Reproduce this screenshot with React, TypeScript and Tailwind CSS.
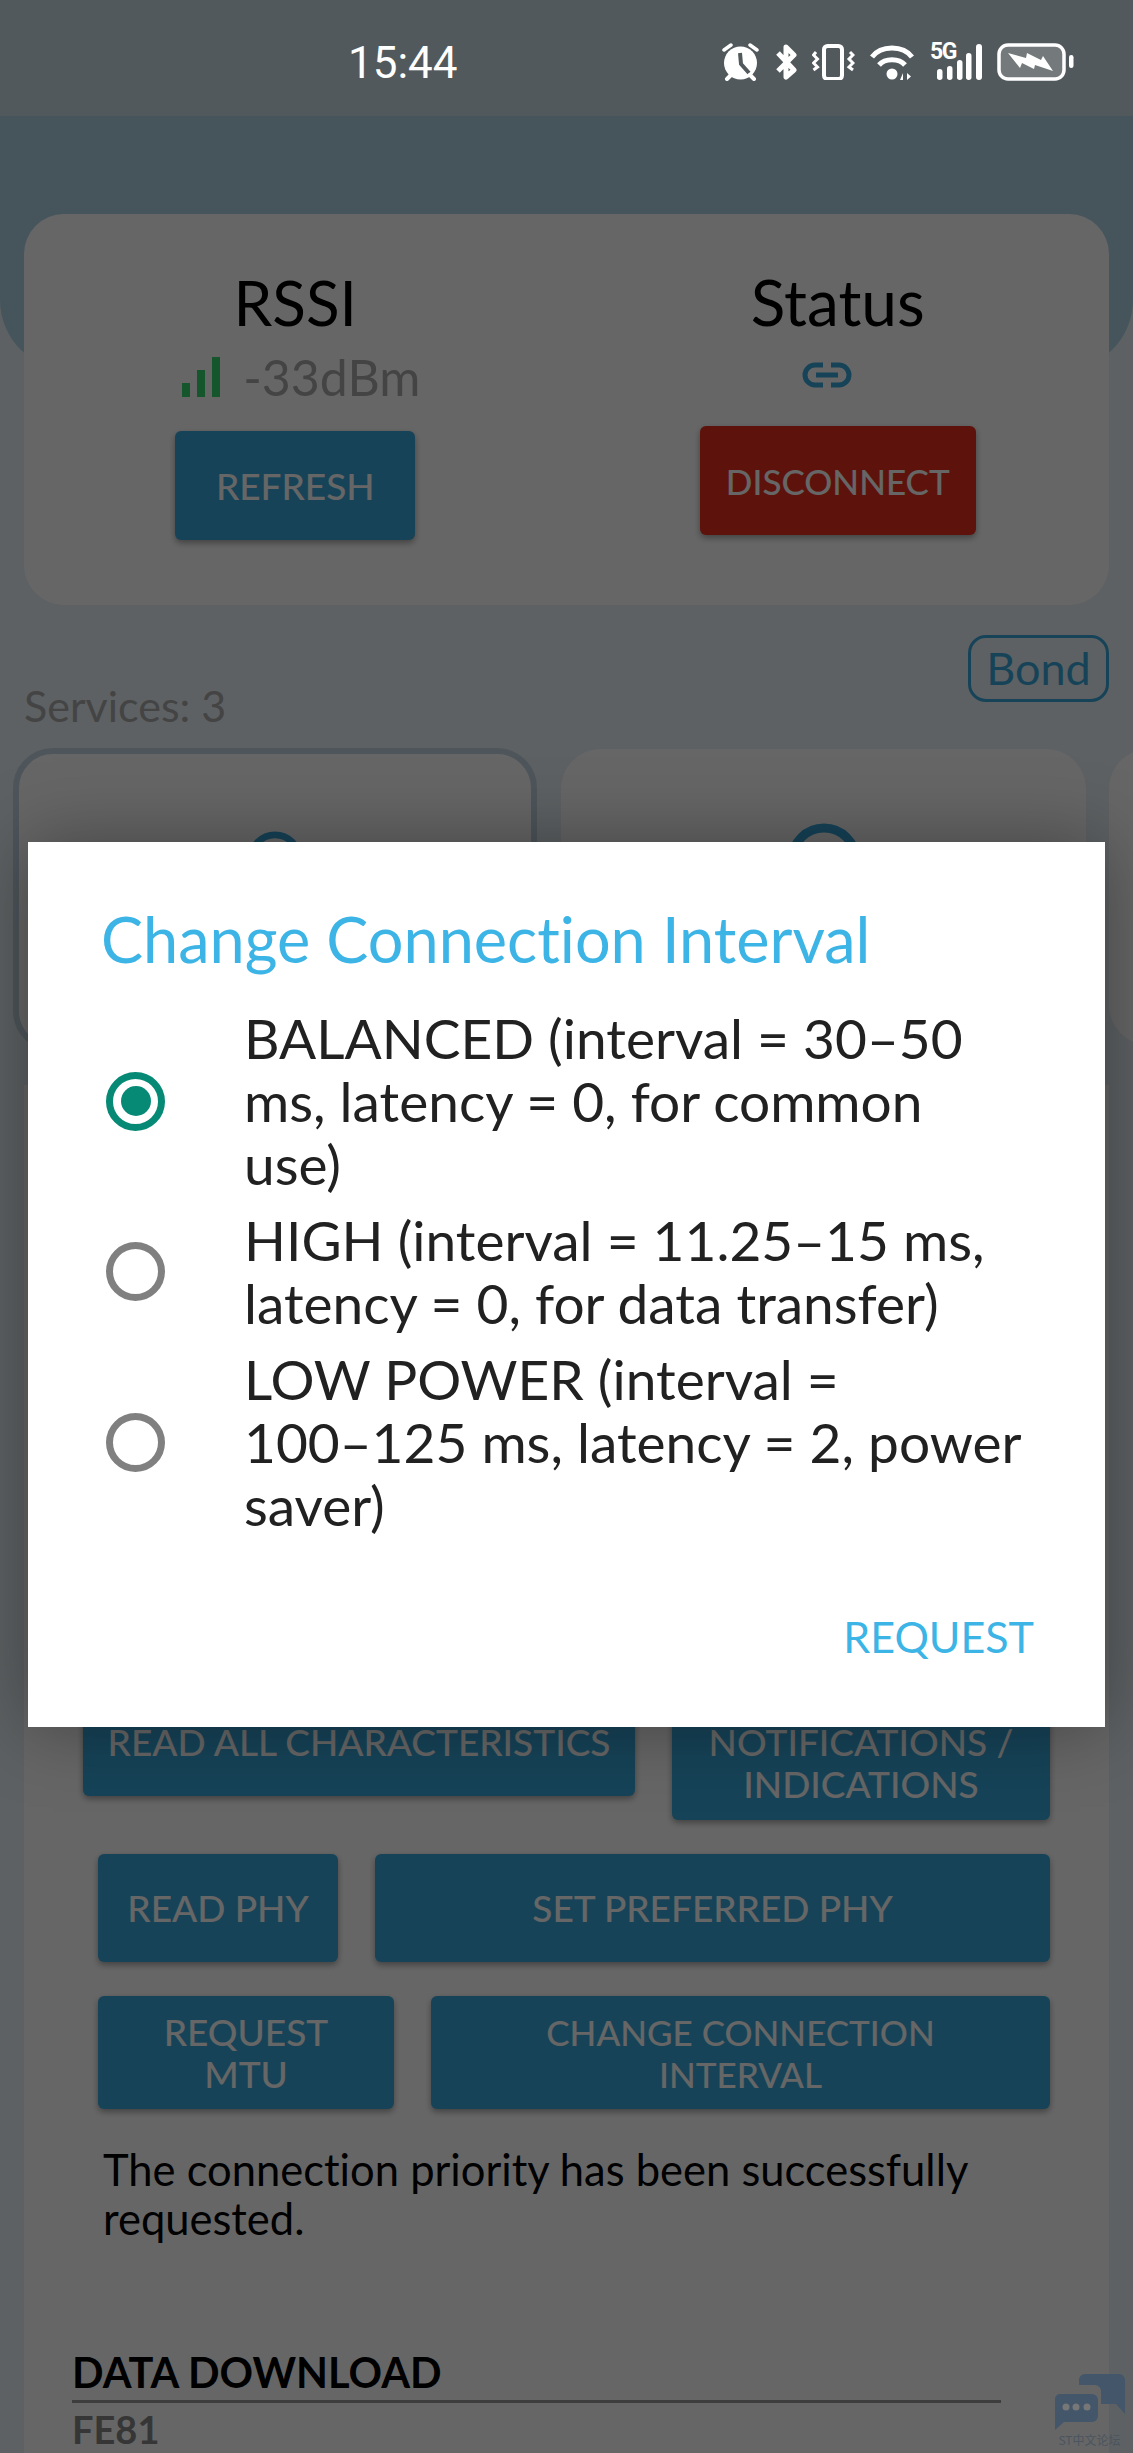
import React from 'react';

function AlarmIcon() {
  return (
    <svg width="38" height="38" viewBox="0 0 38 38">
      <circle cx="18.5" cy="20" r="16.5" fill="#fff" />
      <path d="M18 10l1 11 8 9" stroke="#52595c" strokeWidth="4" fill="none" />
      <path d="M2 7l7-5M35 7l-7-5" stroke="#fff" strokeWidth="3.5" strokeLinecap="round" />
      <path d="M5 36l4-4M32 36l-4-4" stroke="#fff" strokeWidth="4" strokeLinecap="round" />
    </svg>
  );
}

function BluetoothIcon() {
  return (
    <svg width="22" height="36" viewBox="0 0 22 36" fill="none" stroke="#fff" strokeWidth="5" strokeLinejoin="round">
      <path d="M3 9 19 26 11 33V3l8 8L3 27" />
    </svg>
  );
}

function VibrateIcon() {
  return (
    <svg width="43" height="36" viewBox="0 0 43 36" fill="none" stroke="#fff">
      <rect x="12" y="2" width="18" height="33" rx="3.5" strokeWidth="4" />
      <path d="M4 8 1.5 11l4 4-4 4 4 4-4 3" strokeWidth="3" />
      <path d="M38 8l3 3-4 4 4 4-4 4 4 3" strokeWidth="3" />
    </svg>
  );
}

function WifiIcon() {
  return (
    <svg width="45" height="36" viewBox="0 0 45 36" fill="none" stroke="#fff" strokeWidth="5">
      <path d="M2 13C11 1 33 1 42 13" />
      <path d="M9 21c6-7 20-7 26 0" />
      <circle cx="22" cy="30" r="5.5" fill="#fff" stroke="none" />
      <path d="M33 36v-7l-3 7zM37 29v7l4-3.5z" fill="#fff" stroke="none" />
    </svg>
  );
}

function SignalIcon() {
  return (
    <div className="relative w-[52px] h-[38px]">
      <span className="absolute left-0 -top-[3px] text-[23px] leading-[24px] font-bold tracking-[-1.5px] text-white">5G</span>
      <svg width="52" height="38" viewBox="0 0 52 38" fill="#fff">
        <rect x="7" y="26" width="5.5" height="11" rx="2.7" />
        <rect x="17" y="23" width="5.5" height="14" rx="2.7" />
        <rect x="27" y="17" width="5.5" height="20" rx="2.7" />
        <rect x="36" y="10" width="5.5" height="27" rx="2.7" />
        <rect x="46" y="1" width="6" height="36" rx="3" />
      </svg>
    </div>
  );
}

function BatteryIcon() {
  return (
    <svg width="77" height="38" viewBox="0 0 77 38" fill="none">
      <rect x="2" y="2" width="65" height="34" rx="9" stroke="#fff" strokeWidth="3.5" fill="#fff" fillOpacity="0.2" />
      <path d="M11 10 29 15 30 10 44 17 46 13 56 28 38 22 37 26 25 20 23 25z" fill="#fff" />
      <rect x="72" y="12" width="4.5" height="13" rx="2.2" fill="#fff" />
    </svg>
  );
}

function SignalBars() {
  return (
    <svg width="39" height="40" viewBox="0 0 39 40" fill="#36d870">
      <rect x="0" y="26" width="8" height="14" />
      <rect x="15" y="13" width="8" height="27" />
      <rect x="30" y="0" width="8" height="40" />
    </svg>
  );
}

function LinkIcon() {
  return (
    <svg width="50" height="26" viewBox="0 0 50 26" fill="none" stroke="#39a9dc" strokeWidth="5">
      <path d="M21 3H13a10 10 0 0 0 0 20h8" />
      <path d="M29 3h8a10 10 0 0 1 0 20h-8" />
      <path d="M14 13h22" />
    </svg>
  );
}

function ServiceIcon({ size, inner }: { size: number; inner?: boolean }) {
  return (
    <svg width={size} height={size} viewBox="0 0 74 74" fill="none" stroke="#39a9dc" strokeWidth="9">
      <circle cx="37" cy="37" r="32" />
      {inner && <circle cx="37" cy="37" r="14" strokeWidth="7" />}
    </svg>
  );
}

function Radio({ checked }: { checked?: boolean }) {
  return (
    <div
      className={
        checked
          ? 'w-[59px] h-[59px] shrink-0 rounded-full border-[7px] border-[#068a76] flex items-center justify-center'
          : 'w-[59px] h-[59px] shrink-0 rounded-full border-[7px] border-[#808080]'
      }
    >
      {checked && <div className="w-[30px] h-[30px] rounded-full bg-[#068a76]" />}
    </div>
  );
}

function Option({ text, checked, className }: { text: string; checked?: boolean; className: string }) {
  return (
    <div className={`flex items-center gap-[79px] ${className}`}>
      <Radio checked={checked} />
      <span className="w-[785px] text-[55px] leading-[63px] text-[#212121]">{text}</span>
    </div>
  );
}

const btn = 'bg-[#39a9dc] rounded-[6px] shadow-[0_3px_6px_rgba(0,0,0,0.35)] text-white text-[37px] leading-[42px] text-center font-medium';

export default function App() {
  return (
    <div className="relative h-[2453px] overflow-hidden bg-[#e8f3f8] font-['Lato',sans-serif] [font-variant-ligatures:none]">
      {/* Status bar, stays bright above the dim layer */}
      <div className="relative z-10 h-[116px] bg-[#52595c] flex items-center pl-[348px] pr-[59px] font-['Roboto',sans-serif]">
        <span className="text-[44px] text-white mt-[10px]">15:44</span>
        <div className="ml-auto flex items-center gap-[15px] mt-[8px]">
          <AlarmIcon />
          <BluetoothIcon />
          <VibrateIcon />
          <WifiIcon />
          <SignalIcon />
          <BatteryIcon />
        </div>
      </div>

      {/* Header band */}
      <div className="h-[254px] bg-[#afd4e6] rounded-b-[70px]" />

      {/* RSSI / status card */}
      <div className="relative -mt-[156px] mx-[24px] h-[391px] rounded-[40px] bg-white grid grid-cols-2">
        <div className="flex flex-col items-center pt-[53px]">
          <div className="h-[70px] text-[62px] leading-[70px] text-black">RSSI</div>
          <div className="mt-[9px] h-[62px] pl-[12px] flex items-center gap-[22px]">
            <SignalBars />
            <span className="text-[50px] text-[#aaaaaa]">-33dBm</span>
          </div>
          <button className={`${btn} mt-[23px] w-[240px] h-[109px]`}>REFRESH</button>
        </div>
        <div className="flex flex-col items-center pt-[53px]">
          <div className="h-[70px] text-[64px] leading-[70px] text-black">Status</div>
          <div className="mt-[9px] h-[57px] flex items-center pr-[22px]">
            <LinkIcon />
          </div>
          <button className={`${btn} mt-[23px] w-[276px] h-[109px] !bg-[#e8301f] !text-[35px]`}>DISCONNECT</button>
        </div>
      </div>

      {/* Services */}
      <div className="mt-[30px] mx-[24px] h-[96px] flex justify-between">
        <span className="self-end text-[43px] leading-[50px] text-[#aaaaaa]">Services: 3</span>
        <span className="self-start h-[67px] w-[141px] rounded-[18px] border-[3px] border-[#39a9dc] flex items-center justify-center text-[45px] text-[#39a9dc]">
          Bond
        </span>
      </div>
      <div className="mt-[17px] ml-[13px] flex overflow-hidden">
        <div className="w-[524px] h-[303px] shrink-0 rounded-[40px] bg-white border-[6px] border-[#c3d8e4] flex justify-center pt-[77px]">
          <ServiceIcon size={56} />
        </div>
        <div className="ml-[24px] mt-[1px] w-[525px] h-[296px] shrink-0 rounded-[40px] bg-white flex justify-center pt-[74px]">
          <ServiceIcon size={74} inner />
        </div>
        <div className="ml-[23px] mt-[1px] w-[525px] h-[296px] shrink-0 rounded-[40px] bg-white" />
      </div>

      {/* Characteristics card */}
      <div className="mt-[34px] mx-[24px] h-[1400px] bg-white">
        <div className="pt-[603px] pl-[59px] flex items-baseline gap-[37px]">
          <button className={`${btn} w-[552px] py-[33px]`}>READ ALL CHARACTERISTICS</button>
          <button className={`${btn} w-[378px] py-[14.5px] px-[30px]`}>NOTIFICATIONS / INDICATIONS</button>
        </div>
        <div className="mt-[34px] ml-[74px] flex gap-[37px]">
          <button className={`${btn} w-[240px] py-[33px]`}>READ PHY</button>
          <button className={`${btn} w-[675px] py-[33px]`}>SET PREFERRED PHY</button>
        </div>
        <div className="mt-[34px] ml-[74px] flex gap-[37px]">
          <button className={`${btn} w-[296px] pt-[15.5px] pb-[13.5px] px-[50px]`}>REQUEST MTU</button>
          <button className={`${btn} w-[619px] pt-[15.5px] pb-[13.5px] px-[60px] !text-[35px]`}>CHANGE CONNECTION INTERVAL</button>
        </div>
        <p className="mt-[36px] ml-[79px] w-[920px] text-[43.5px] leading-[49px] text-black">
          The connection priority has been successfully requested.
        </p>
        <div className="mt-[105px] ml-[48px] w-[929px]">
          <div className="text-[41.5px] leading-[48px] font-bold text-black border-b-[3px] border-[#999999] pb-[4px]">
            DATA DOWNLOAD
          </div>
          <div className="mt-[2px] text-[38px] leading-[48px] font-bold text-[#888888]">FE81</div>
        </div>
      </div>

      {/* Dim layer and dialog */}
      <div className="absolute inset-0 bg-black/60 pt-[842px] px-[28px]">
        <div className="h-[885px] bg-white pl-[78px] pt-[57px] shadow-[0_0_70px_rgba(0,0,0,0.35)]">
          <h2 className="-ml-[5px] h-[80px] text-[63px] leading-[80px] text-[#3cb4e6]">Change Connection Interval</h2>
          <div className="mt-[21px]">
            <Option className="h-[202px]" checked text="BALANCED (interval = 30⁠–⁠50 ms, latency = 0, for common use)" />
            <Option className="h-[139px]" text="HIGH (interval = 11.25⁠–⁠15 ms, latency = 0, for data transfer)" />
            <Option className="h-[202px]" text="LOW POWER (interval = 100⁠–⁠125 ms, latency = 2, power saver)" />
          </div>
          <div className="mt-[64px] pr-[71px] text-right text-[43px] leading-[60px] text-[#3cb4e6]">REQUEST</div>
        </div>
      </div>

      {/* Watermark */}
      <div className="absolute right-[8px] bottom-[6px] w-[71px] flex flex-col items-center">
        <svg width="71" height="56" viewBox="0 0 71 56">
          <path d="M25 0h40a6 6 0 0 1 6 6v34L62 30H47V17a6 6 0 0 0-6-6H25V6a6 6 0 0 1 6-6z" fill="#43566a" />
          <path d="M6 20h32a6 6 0 0 1 6 6v16a6 6 0 0 1-6 6H10L1 56V25a5 5 0 0 1 5-5z" fill="#43566a" />
          <circle cx="12" cy="33" r="3.5" fill="#777" />
          <circle cx="22" cy="33" r="3.5" fill="#777" />
          <circle cx="33" cy="33" r="3.5" fill="#777" />
        </svg>
        <span className="mt-[3px] whitespace-nowrap text-[12px] leading-[14px] text-[#4a5560] font-['Noto_Sans_CJK_SC',sans-serif]">ST中文论坛</span>
      </div>
    </div>
  );
}
